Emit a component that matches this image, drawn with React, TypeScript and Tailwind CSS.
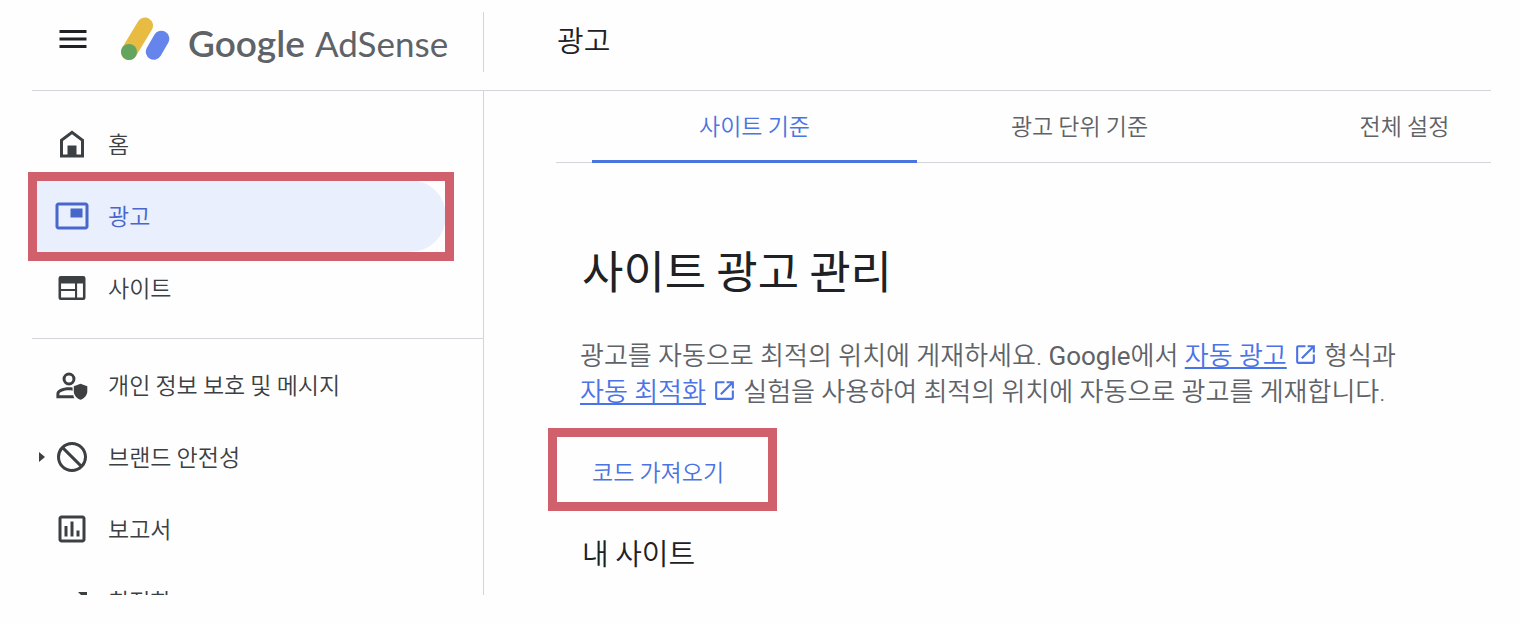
import React from "react";
import {
  MdBlock,
  MdMenu,
  MdOpenInNew,
  MdOutlineAssessment,
  MdPictureInPicture,
  MdTrendingUp,
} from "react-icons/md";
import clsx from "clsx";

interface INavItem {
  label: string;
  icon: React.ReactNode;
  active?: boolean;
  expandable?: boolean;
}

const HomeIcon = () => (
  <svg viewBox="0 0 24 24" className="size-9" fill="currentColor">
    <path
      fillRule="evenodd"
      d="M12 3 4 9v12h16V9l-8-6zM6 19v-9l6-4.5 6 4.5v9h-3v-6H9v6H6z"
    />
  </svg>
);

const SitesIcon = () => (
  <svg viewBox="0 0 24 24" className="size-9" fill="currentColor">
    <path
      fillRule="evenodd"
      d="M4.5 4h15A1.5 1.5 0 0 1 21 5.5v13a1.5 1.5 0 0 1-1.5 1.5h-15A1.5 1.5 0 0 1 3 18.5v-13A1.5 1.5 0 0 1 4.5 4zM4.7 9v3.7H14V9H4.7zm0 5v4.300H14V14H4.7zm10.700-5v9.300h3.900V9h-3.900z"
    />
  </svg>
);

const PrivacyIcon = () => (
  <svg viewBox="0 0 24 24" className="size-9" fill="currentColor">
    <circle cx="10" cy="8" r="3.3" fill="none" stroke="currentColor" strokeWidth="2" />
    <path d="M1.6 20.8V18c0-3 4-4.500 8.400-4.500.9 0 1.700.1 2.400.2v2.100c-.7-.2-1.500-.3-2.400-.3-3.500 0-6.400 1.200-6.400 2.500v.8h9.300c.1.700.3 1.400.7 2H1.600z" />
    <path d="M17.700 11.200 22.200 12.900v3.300c0 2.600-1.900 4.900-4.500 5.600-2.600-.7-4.500-3-4.500-5.600v-3.300l4.500-1.700z" />
  </svg>
);

const AdSenseMark = () => (
  <svg viewBox="0 0 50 44" className="h-11 w-[50px] shrink-0" strokeLinecap="round" strokeWidth="16">
    <path d="M9 35 25 8.500" stroke="#e8bb43" />
    <path d="M33.800 34.700 41.300 21.700" stroke="#6585ec" />
    <circle cx="9" cy="35" r="8" fill="#63a45f" />
  </svg>
);

const mainItems: INavItem[] = [
  { label: "홈", icon: <HomeIcon /> },
  { label: "광고", icon: <MdPictureInPicture className="size-9" />, active: true },
  { label: "사이트", icon: <SitesIcon /> },
];

const toolItems: INavItem[] = [
  { label: "개인 정보 보호 및 메시지", icon: <PrivacyIcon /> },
  {
    label: "브랜드 안전성",
    icon: <MdBlock className="size-9 -scale-x-100" />,
    expandable: true,
  },
  { label: "보고서", icon: <MdOutlineAssessment className="size-9" /> },
  { label: "최적화", icon: <MdTrendingUp className="size-9" /> },
];

const tabs = ["사이트 기준", "광고 단위 기준", "전체 설정"];

const NavItem: React.FC<{ item: INavItem }> = ({ item }) => (
  <li className="relative mr-[37px]">
    <a
      href="#"
      aria-current={item.active ? "page" : undefined}
      className={clsx(
        "flex h-18 items-center text-[23px]",
        item.active
          ? "rounded-r-full bg-[#e9effc] text-[#4767cb]"
          : "text-[#3c4043]"
      )}
    >
      <span className="flex w-[22px] justify-center pr-0.5">
        {item.expandable && (
          <svg viewBox="0 0 6 10" className="h-2.5 w-1.5" fill="currentColor">
            <path d="M0 0v10l6-5z" />
          </svg>
        )}
      </span>
      {item.icon}
      <span className="ml-[18px] pb-0.5 whitespace-nowrap">{item.label}</span>
    </a>
    {item.active && (
      <span className="pointer-events-none absolute -top-2 -right-2 -bottom-[9px] -left-1 border-[9px] border-[#d1606d]" />
    )}
  </li>
);

const HelpLink: React.FC<{ children: React.ReactNode }> = ({ children }) => (
  <a href="#" className="text-[#4a74e6]">
    <span className="underline decoration-2 underline-offset-2">{children}</span>
    <MdOpenInNew className="ml-1.5 inline-block size-[25px] align-[-2px]" />
  </a>
);

export default function App() {
  const [activeTab, setActiveTab] = React.useState(0);

  return (
    <div className="flex h-screen flex-col overflow-hidden bg-[#fefefe] pr-[29px] pb-[29px] font-['Noto_Sans_CJK_KR',sans-serif] font-[350] text-[#202124]">
      <header className="ml-8 flex shrink-0 border-b border-[#d4d5dc] pt-3 pb-[18px]">
        <div className="flex h-15 w-[452px] shrink-0 items-center border-r border-[#d4d5dc] pb-1.5 pl-[23px]">
          <button type="button" aria-label="메뉴">
            <MdMenu className="size-9" />
          </button>
          <a href="#" className="ml-[29px] flex items-center">
            <AdSenseMark />
            <span className="mt-2 ml-[18px] flex items-baseline gap-2.5 font-[Lato,sans-serif] leading-10 text-[#5f6368]">
              <span className="text-[37px] font-semibold">Google</span>
              <span className="text-[35px] font-normal">AdSense</span>
            </span>
          </a>
        </div>
        <h1 className="flex items-center pb-1 pl-[73px] text-[29px]">광고</h1>
      </header>

      <div className="flex min-h-0 flex-1 overflow-hidden pl-8">
        <nav className="w-[452px] shrink-0 border-r border-[#d4d5dc] pt-[17px]">
          <ul>
            {mainItems.map((item) => (
              <NavItem key={item.label} item={item} />
            ))}
          </ul>
          <ul className="mt-3.5 border-t border-[#d4d5dc] pt-2.5">
            {toolItems.map((item) => (
              <NavItem key={item.label} item={item} />
            ))}
          </ul>
        </nav>

        <main className="min-w-0 flex-1 pl-18">
          <div
            role="tablist"
            className="flex overflow-hidden pl-9 shadow-[inset_0_-1px_#d4d5dc]"
          >
            {tabs.map((tab, index) => (
              <button
                key={tab}
                type="button"
                role="tab"
                aria-selected={index === activeTab}
                onClick={() => setActiveTab(index)}
                className={clsx(
                  "h-18 w-[325px] shrink-0 border-b-[3px] text-[23px]",
                  index === activeTab
                    ? "border-b-[#4a74e0] text-[#4a74e0]"
                    : "border-b-transparent text-[#5f6368]"
                )}
              >
                {tab}
              </button>
            ))}
          </div>

          <div className="pt-[79px] pr-18 pl-6">
            <h2 className="pl-0.5 text-[45px] leading-14 font-normal">
              사이트 광고 관리
            </h2>
            <p className="mt-10 font-[Roboto,'Noto_Sans_CJK_KR',sans-serif] text-[26px] leading-9 text-[#5f6368]">
              광고를 자동으로 최적의 위치에 게재하세요.{" "}
              <span className="font-normal">Google</span>에서{" "}
              <HelpLink>자동 광고</HelpLink> 형식과{" "}
              <HelpLink>자동 최적화</HelpLink> 실험을 사용하여 최적의 위치에
              자동으로 광고를 게재합니다.
            </p>
            <button
              type="button"
              className="mt-[18px] -ml-8 block h-[83px] w-[229px] border-[9px] border-[#d1606d] pt-1 pl-[35px] text-left text-[23px] text-[#4a74e0]"
            >
              코드 가져오기
            </button>
            <h3 className="mt-[23px] pl-0.5 text-[29px] leading-9">내 사이트</h3>
          </div>
        </main>
      </div>
    </div>
  );
}
